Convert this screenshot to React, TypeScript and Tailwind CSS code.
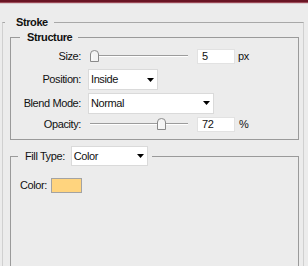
import React from 'react';

function Thumb() {
  return (
    <svg width="9" height="12" viewBox="0 0 9 12" className="block">
      <path d="M0.5 11.5 V4 Q0.5 0.5 4.5 0.5 Q8.5 0.5 8.5 4 V11.5 Z" fill="#f4f4f4" stroke="#8a8a8a" />
      <path d="M2 10.5 V4.5" stroke="#ffffff" />
    </svg>
  );
}

function Slider({ pos }: { pos: number }) {
  return (
    <div className="relative w-[98px] h-[14px]">
      <div className="absolute left-0 right-0 top-[6px] h-px bg-[#9c9c9c]" />
      <div className="absolute left-0 right-0 top-[7px] h-px bg-white" />
      <div className="absolute top-[1px]" style={{ left: pos }}>
        <Thumb />
      </div>
    </div>
  );
}

function Arrow() {
  return (
    <svg width="7" height="4" viewBox="0 0 7 4" className="block">
      <path d="M0 0 H7 L3.5 4 Z" fill="#000" />
    </svg>
  );
}

function Select({ value, width, height = 21 }: { value: string; width: string; height?: number }) {
  return (
    <div
      className={`${width} flex items-center justify-between bg-white border border-[#dadada] pl-[2px] pr-[3px]`}
      style={{ height }}
    >
      <span>{value}</span>
      <Arrow />
    </div>
  );
}

function Field({ value }: { value: string }) {
  return (
    <div className="w-[38px] h-[15px] bg-white border border-[#e2e2e2] pl-[4px] flex items-center">{value}</div>
  );
}

export default function App() {
  return (
    <div className="w-[308px] h-[266px] overflow-hidden bg-[#ececec] text-[11px] leading-[13px] tracking-[-0.4px] text-[#111] [font-family:'Liberation_Sans',Arial,sans-serif]">
      {/* title bar edge */}
      <div className="h-[2px] bg-[#6a1524]" />
      <div className="h-px bg-[#9b4a58]" />
      <div className="h-px bg-[#dccbce]" />

      {/* Stroke */}
      <fieldset className="ml-[2px] w-[302px] mt-[12px] border border-b-0 border-[#a8a8a8] border-l-[#d0d0d0] border-r-[#d0d0d0] pt-[2px]">
        <legend className="ml-[2px] pl-[11px] pr-[6px] font-bold">Stroke</legend>

        {/* Structure */}
        <fieldset className="ml-[7px] w-[289px] border border-[#9a9a9a] pt-[2px] pb-[5px]">
          <legend className="ml-[9px] pl-[7px] pr-[6px] font-bold">Structure</legend>

          <div className="flex items-center h-[20px]">
            <div className="w-[70px] text-right">Size:</div>
            <div className="ml-[9px]">
              <Slider pos={0} />
            </div>
            <div className="ml-[9px]">
              <Field value="5" />
            </div>
            <span className="ml-[3px]">px</span>
          </div>

          <div className="flex items-center h-[23px] mt-[2px]">
            <div className="w-[70px] text-right">Position:</div>
            <div className="ml-[7px]">
              <Select value="Inside" width="w-[70px]" />
            </div>
          </div>

          <div className="flex items-center h-[22px] mt-[1px]">
            <div className="w-[70px] text-right">Blend Mode:</div>
            <div className="ml-[7px]">
              <Select value="Normal" width="w-[126px]" />
            </div>
          </div>

          <div className="flex items-center h-[20px]">
            <div className="w-[70px] text-right">Opacity:</div>
            <div className="ml-[9px]">
              <Slider pos={67} />
            </div>
            <div className="ml-[9px]">
              <Field value="72" />
            </div>
            <span className="ml-[4px]">%</span>
          </div>
        </fieldset>

        {/* Fill */}
        <fieldset className="ml-[7px] w-[289px] mt-[6px] h-[140px] border border-[#9a9a9a]">
          <legend className="ml-[7px] pl-[7px] pr-[4px] flex items-center">
            <span>Fill Type:</span>
            <div className="ml-[6px]">
              <Select value="Color" width="w-[77px]" height={20} />
            </div>
          </legend>

          <div className="flex items-center pl-[9px] pt-[12px]">
            <span className="w-[31px]">Color:</span>
            <div className="w-[31px] h-[15px] border border-[#a3a3a3] bg-[#ffd47e]" />
          </div>
        </fieldset>
      </fieldset>
    </div>
  );
}
